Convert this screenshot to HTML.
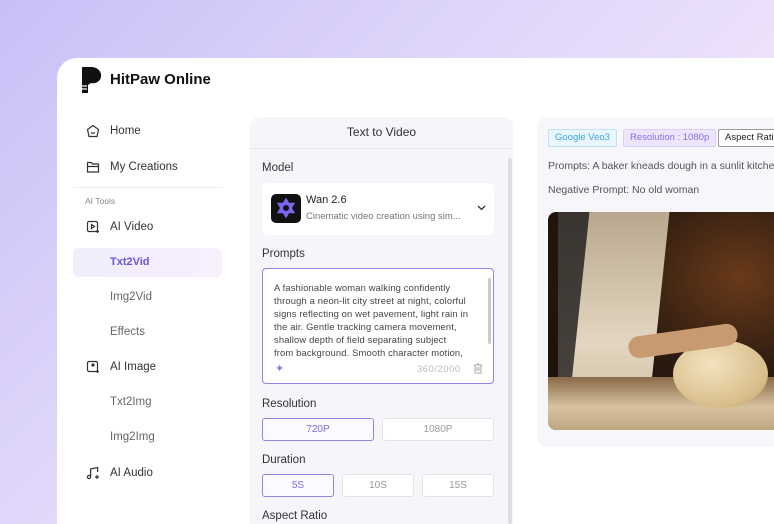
<!DOCTYPE html>
<html style="width:774px;height:524px;overflow:hidden"><head><meta charset="utf-8"><style>
*{box-sizing:border-box;margin:0;padding:0}
body{width:774px;height:524px;overflow:hidden;font-family:"Liberation Sans","DejaVu Sans",sans-serif;background:linear-gradient(135deg,#c9bff7 0%,#ddd4fa 35%,#f3e6fb 75%,#fbeefa 100%);position:relative;color:#222}
.card{position:absolute;left:57px;top:58px;width:740px;height:480px;background:#fff;border-radius:20px 20px 0 0}
.abs{position:absolute}
.logo{left:80px;top:66px}
.brand{left:110px;top:71px;font-size:15px;font-weight:bold;color:#111}
.nav{position:absolute;left:110px;font-size:11.5px;color:#333}
.sub{color:#666}
.ico{position:absolute;left:86px}
.mid{position:absolute;left:250px;top:117px;width:263px;height:420px;background:#f5f5fa;border-radius:10px}
.lbl{position:absolute;left:262px;font-size:11.5px;color:#333}
.btn{position:absolute;height:23px;border:1px solid #e3e3ea;background:#fff;border-radius:3px;font-size:10px;color:#999;text-align:center;line-height:21px}
.btn.on{border-color:#8f86e6;color:#7a6ee0;background:#fbfbff}
.right{position:absolute;left:537px;top:117px;width:250px;height:330px;background:#f7f7fb;border-radius:10px}
.tag{position:absolute;top:129px;height:18px;font-size:9.5px;line-height:16px;padding:0 6px;border-radius:2px;white-space:nowrap}
</style></head><body>
<div class="card"></div>
<svg class="abs logo" width="24" height="28" viewBox="0 0 24 28"><path d="M2 1 H11 C18 1 22 6 21 11 C20 16 15 18 11 17 L8 19 L8 27 L2 27 Z" fill="#111"/><path d="M2 20h5M2 23h5" stroke="#fff" stroke-width="1.2"/></svg>
<div class="abs brand">HitPaw Online</div>

<svg class="ico" style="top:124px" width="14" height="14" viewBox="0 0 14 14" fill="none" stroke="#333" stroke-width="1.2"><path d="M7 1.5 L12.5 5.5 L11 12.5 H3 L1.5 5.5 Z"/><path d="M5 8.5 Q7 10 9 8.5"/></svg>
<div class="nav" style="top:125px">Home</div>
<svg class="ico" style="top:160px" width="14" height="14" viewBox="0 0 14 14" fill="none" stroke="#333" stroke-width="1.2"><path d="M1.5 2.5h4l1 1.5h6v8h-11z M1.5 6.5h11"/></svg>
<div class="nav" style="top:161px">My Creations</div>
<div class="abs" style="left:73px;top:187px;width:150px;height:1px;background:#eee"></div>
<div class="abs" style="left:85px;top:196px;font-size:8.5px;color:#888">AI Tools</div>
<svg class="ico" style="top:220px" width="14" height="14" viewBox="0 0 14 14" fill="none" stroke="#333" stroke-width="1.2"><rect x="1.5" y="1.5" width="10" height="10" rx="1.5"/><path d="M5.5 4.5l3 2-3 2z"/><path d="M11.5 10v3M10 11.5h3"/></svg>
<div class="nav" style="top:221px">AI Video</div>
<div class="abs" style="left:73px;top:248px;width:149px;height:29px;border-radius:6px;background:linear-gradient(90deg,#f1edfd,#f7effd)"></div>
<div class="nav" style="top:256px;font-weight:bold;color:#6b55d9;font-size:11px">Txt2Vid</div>
<div class="nav sub" style="top:291px">Img2Vid</div>
<div class="nav sub" style="top:326px">Effects</div>
<svg class="ico" style="top:360px" width="14" height="14" viewBox="0 0 14 14" fill="none" stroke="#333" stroke-width="1.2"><rect x="1.5" y="1.5" width="10" height="10" rx="1.5"/><circle cx="7" cy="5" r="1" fill="#333"/><path d="M11.5 10v3M10 11.5h3"/></svg>
<div class="nav" style="top:361px">AI Image</div>
<div class="nav sub" style="top:396px">Txt2Img</div>
<div class="nav sub" style="top:431px">Img2Img</div>
<svg class="ico" style="top:466px" width="14" height="14" viewBox="0 0 14 14" fill="none" stroke="#333" stroke-width="1.2"><circle cx="3" cy="11" r="1.6"/><path d="M4.6 11V3l7-1.5V6"/><path d="M11 9v4M9 11h4"/></svg>
<div class="nav" style="top:467px">AI Audio</div>

<div class="mid"></div>
<div class="abs" style="left:250px;top:148px;width:263px;height:1px;background:#e6e6ee"></div>
<div class="abs" style="left:250px;top:125px;width:263px;text-align:center;font-size:12px;color:#333">Text to Video</div>
<div class="abs" style="left:508px;top:158px;width:4px;height:366px;background:#dcdce2;border-radius:2px"></div>
<div class="lbl" style="top:162px">Model</div>
<div class="abs" style="left:262px;top:183px;width:232px;height:52px;background:#fff;border-radius:5px"></div>
<div class="abs" style="left:271px;top:194px;width:30px;height:29px;border-radius:5px;background:#111"></div>
<svg class="abs" style="left:276px;top:198px" width="20" height="20" viewBox="0 0 20 20"><path d="M10 2 L17 14 L3 14 Z M3 6 L17 6 L10 18 Z" fill="none" stroke="#7a66f0" stroke-width="2.4"/></svg>
<div class="abs" style="left:306px;top:194px;font-size:11px;color:#222">Wan 2.6</div>
<div class="abs" style="left:306px;top:211px;font-size:9.5px;color:#777">Cinematic video creation using sim...</div>
<svg class="abs" style="left:477px;top:205px" width="9" height="6" viewBox="0 0 9 6"><path d="M1 1l3.5 3.5L8 1" stroke="#333" stroke-width="1.3" fill="none"/></svg>
<div class="lbl" style="top:248px">Prompts</div>
<div class="abs" style="left:262px;top:268px;width:232px;height:116px;border:1px solid #8f86e6;border-radius:4px;background:#fff"></div>
<div class="abs" style="left:274px;top:281px;width:214px;font-size:9.4px;line-height:13.1px;color:#444;letter-spacing:.15px">A fashionable woman walking confidently<br>through a neon-lit city street at night, colorful<br>signs reflecting on wet pavement, light rain in<br>the air. Gentle tracking camera movement,<br>shallow depth of field separating subject<br>from background. Smooth character motion,</div>
<div class="abs" style="left:488px;top:278px;width:3px;height:66px;background:#ccc;border-radius:2px"></div>
<div class="abs" style="left:275px;top:362px;font-size:11px;color:#8a7ae8">✦</div>
<div class="abs" style="left:417px;top:364px;font-size:9.5px;color:#bbb;letter-spacing:.5px">360/2000</div>
<svg class="abs" style="left:473px;top:363px" width="10" height="11" viewBox="0 0 10 11"><path d="M1 2h8M4 1h2M2 2v8h6V2M4 4v4M6 4v4" stroke="#aaa" stroke-width="1" fill="none"/></svg>
<div class="lbl" style="top:398px">Resolution</div>
<div class="btn on" style="left:262px;top:418px;width:112px">720P</div>
<div class="btn" style="left:382px;top:418px;width:112px">1080P</div>
<div class="lbl" style="top:454px">Duration</div>
<div class="btn on" style="left:262px;top:474px;width:72px">5S</div>
<div class="btn" style="left:342px;top:474px;width:72px">10S</div>
<div class="btn" style="left:422px;top:474px;width:72px">15S</div>
<div class="lbl" style="top:510px">Aspect Ratio</div>

<div class="right"></div>
<div class="tag" style="left:548px;border:1px solid #bfe3f7;background:#eaf6fd;color:#3aa6e0">Google Veo3</div>
<div class="tag" style="left:623px;border:1px solid #d9cffa;background:#ece6fd;color:#8a6ee6">Resolution : 1080p</div>
<div class="tag" style="left:718px;border:1px solid #999;background:#fff;color:#222">Aspect Ratio</div>
<div class="abs" style="left:548px;top:160px;font-size:10.5px;color:#555;white-space:nowrap">Prompts: A baker kneads dough in a sunlit kitchen</div>
<div class="abs" style="left:548px;top:184px;font-size:10.5px;color:#555">Negative Prompt: No old woman</div>
<div class="abs" style="left:548px;top:212px;width:240px;height:218px;border-radius:8px;overflow:hidden;background:radial-gradient(ellipse at 80% 30%,#6a3a1a 0%,#2a1a10 45%,#15100a 100%)">
 <div class="abs" style="left:10px;top:0;width:90px;height:218px;background:linear-gradient(180deg,#3a3530,#4a4540)"></div>
 <div class="abs" style="left:30px;top:0;width:80px;height:218px;background:linear-gradient(180deg,#b9a88f,#e3d6c0 60%,#c9b89c);transform:skewX(-6deg)"></div>
 <div class="abs" style="left:0;top:165px;width:240px;height:60px;background:linear-gradient(180deg,#8a6a48,#d8c2a0 50%,#b89e7a)"></div>
 <div class="abs" style="left:125px;top:128px;width:95px;height:68px;border-radius:50%;background:radial-gradient(ellipse at 40% 35%,#f3e2bf,#d8bd8a 70%,#a88a5a)"></div>
 <div class="abs" style="left:80px;top:118px;width:110px;height:22px;border-radius:12px;background:#c79a72;transform:rotate(-8deg)"></div>
</div>
</body></html>
